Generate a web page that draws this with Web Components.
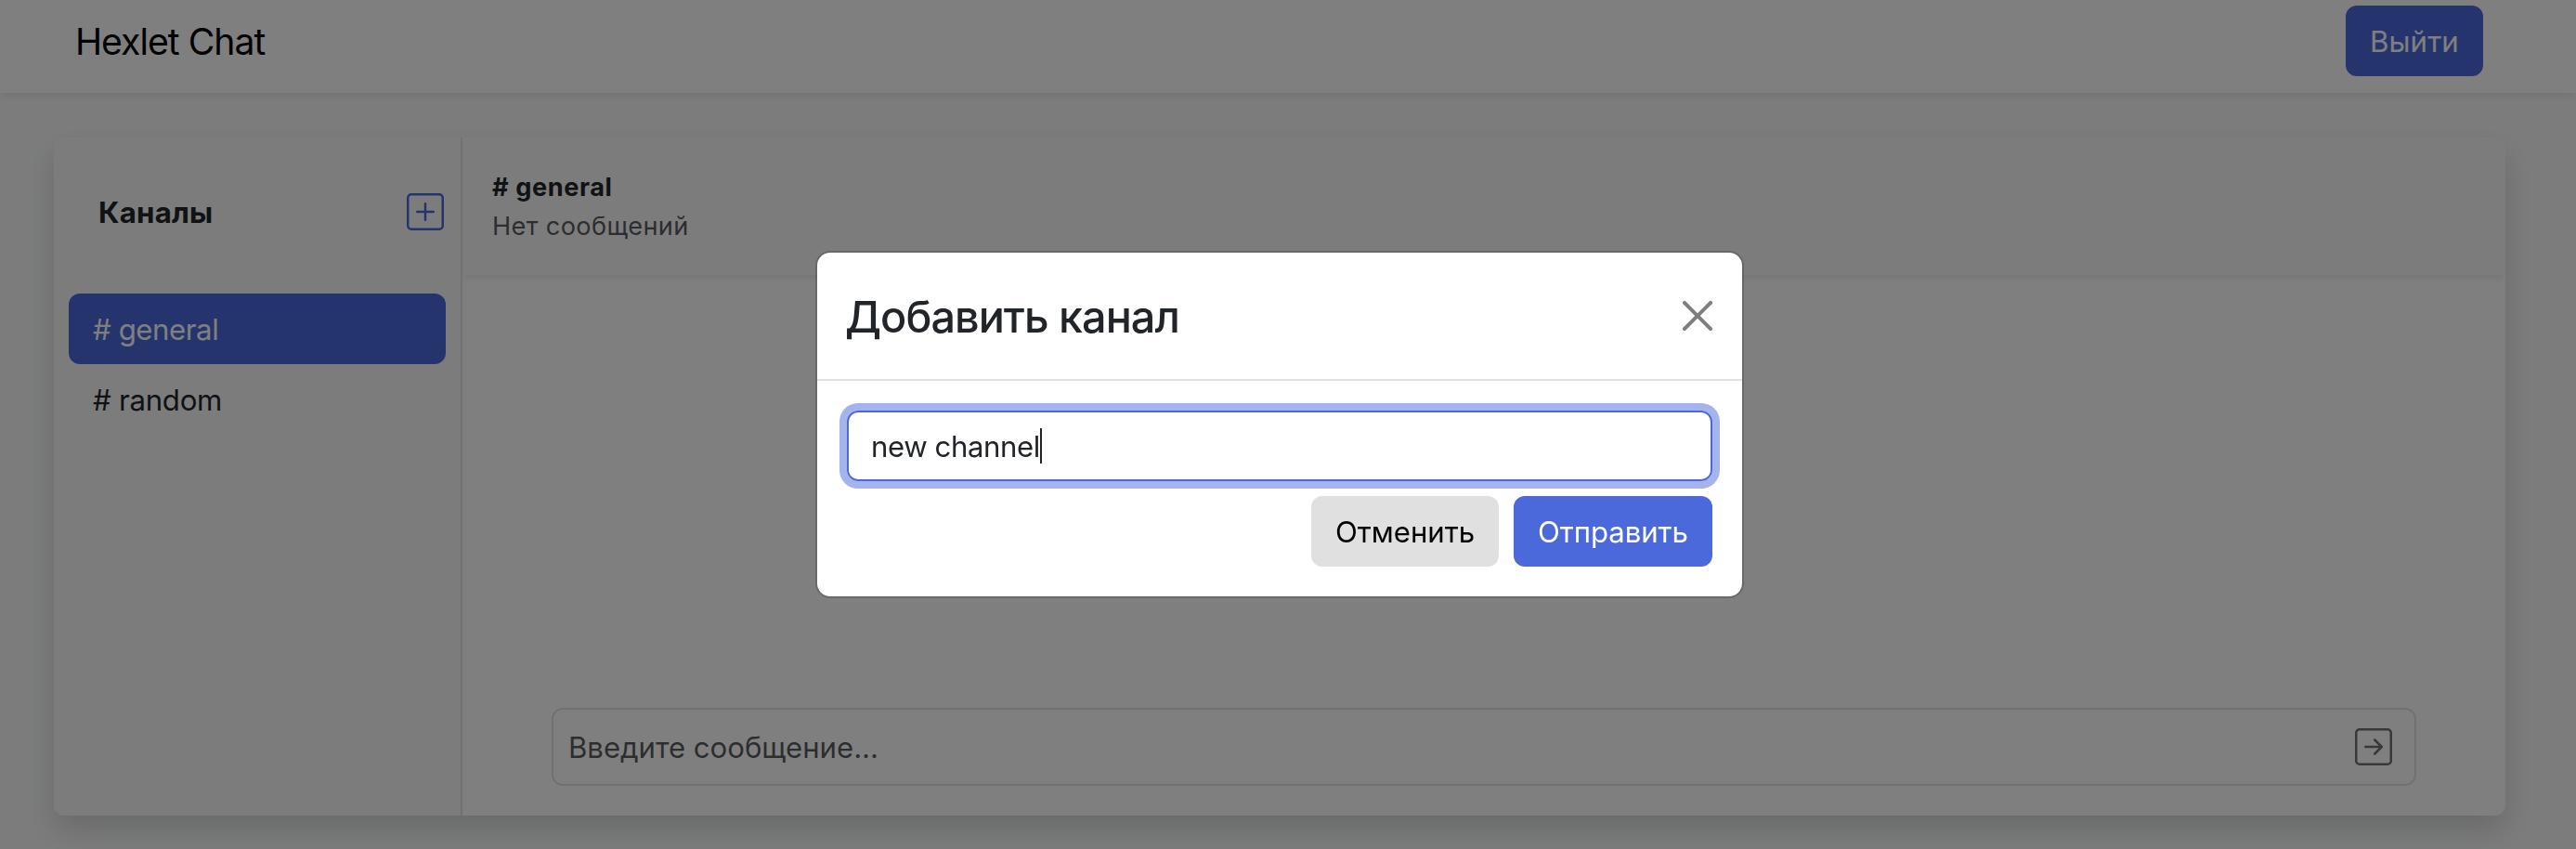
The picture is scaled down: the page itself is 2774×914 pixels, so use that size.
<!DOCTYPE html>
<html lang="ru">
<head>
<meta charset="utf-8">
<title>Hexlet Chat</title>
<style>
  html, body { margin: 0; height: 100%; overflow: hidden; }
  body {
    background: #f8f9fa; color: #212529;
    font-family: Inter, "Liberation Sans", sans-serif; font-size: 31.2px; line-height: 48px;
    --primary: #4b69db; --border: #dee2e6;
  }
</style>
</head>
<body>
<chat-page>
  <chat-navbar slot="nav">Hexlet Chat<ui-button slot="action" style="--w:148px;--ls:.118px">Выйти</ui-button></chat-navbar>
  <chat-card slot="card">
    <channel-list slot="side">
      Каналы
      <channel-item slot="item" active style="--ls:-.442px"># general</channel-item>
      <channel-item slot="item" style="--ls:-.271px"># random</channel-item>
    </channel-list>
    <chat-header slot="main"># general<span slot="count">Нет сообщений</span></chat-header>
    <message-form slot="main">Введите сообщение...</message-form>
  </chat-card>
</chat-page>
<chat-modal>
  Добавить канал
  <text-field slot="body">new channel</text-field>
  <ui-button slot="actions" variant="light" style="--w:202px;--ls:-.04px">Отменить</ui-button>
  <ui-button slot="actions" style="--w:214px;--ls:-.09px">Отправить</ui-button>
</chat-modal>

<script>
const define = (name, html) => {
  const tpl = document.createElement('template');
  tpl.innerHTML = '<style>*{box-sizing:border-box}:host{box-sizing:border-box}</style>' + html;
  customElements.define(name, class extends HTMLElement {
    constructor() {
      super();
      this.attachShadow({ mode: 'open' }).append(tpl.content.cloneNode(true));
    }
  });
};

define('chat-page', `
  <style>
    :host { display: flex; flex-direction: column; height: 914px; }
    main { padding: 48px 76px 36px 58px; flex: 1; display: flex; }
    ::slotted(chat-card) { flex: 1; }
  </style>
  <slot name="nav"></slot><main><slot name="card"></slot></main>`);

define('chat-navbar', `
  <style>
    :host { display: flex; justify-content: space-between; align-items: center; height: 100px;
      padding: 0 100px 12px 81px; background: #fff; box-shadow: 0 4px 8px rgba(0,0,0,.075); flex: none; }
    .brand { padding-top: 2px; font-size: 39.2px; letter-spacing: -1px; color: #000; line-height: 60px; white-space: nowrap; }
  </style>
  <div class="brand"><slot></slot></div><slot name="action"></slot>`);

define('ui-button', `
  <style>
    :host { display: flex; align-items: center; width: var(--w); height: 76px; padding: 2px 0 0 26px;
      border-radius: 12px; background: var(--primary); color: #fff; letter-spacing: var(--ls);
      font-size: 31.2px; white-space: nowrap; }
    :host([variant="light"]) { background: #e0e0e0; color: #000; }
  </style><slot></slot>`);

define('chat-card', `
  <style>
    :host { display: block; border-radius: 12px; box-shadow: 0 16px 32px rgba(0,0,0,.15); height: 730px; }
    .grid { display: grid; grid-template-columns: 440px minmax(0, 1fr); height: 100%; border-radius: 12px;
      overflow: hidden; background: #fff; }
    aside { background: #f8f9fa; border-right: 2px solid var(--border); }
    section { display: flex; flex-direction: column; justify-content: space-between; overflow: hidden; }
  </style>
  <div class="grid"><aside><slot name="side"></slot></aside><section><slot name="main"></slot></section></div>`);

define('channel-list', `
  <style>
    :host { display: block; }
    header { display: flex; justify-content: space-between; align-items: center; height: 160px;
      padding: 0 18px 0 48px; font-weight: 700; letter-spacing: .241px; }
    span { padding-top: 2px; }
    svg { width: 40px; height: 40px; fill: var(--primary); display: block; }
    nav { padding: 8px 16px 0; }
  </style>
  <header><span><slot></slot></span>
    <svg viewBox="0 0 16 16"><path d="M14 1a1 1 0 0 1 1 1v12a1 1 0 0 1-1 1H2a1 1 0 0 1-1-1V2a1 1 0 0 1 1-1zM2 0a2 2 0 0 0-2 2v12a2 2 0 0 0 2 2h12a2 2 0 0 0 2-2V2a2 2 0 0 0-2-2z"/><path d="M8 4a.5.5 0 0 1 .5.5v3h3a.5.5 0 0 1 0 1h-3v3a.5.5 0 0 1-1 0v-3h-3a.5.5 0 0 1 0-1h3v-3A.5.5 0 0 1 8 4"/></svg>
  </header>
  <nav><slot name="item"></slot></nav>`);

define('channel-item', `
  <style>
    :host { display: flex; align-items: center; height: 76px; padding: 2px 0 0 26px; border-radius: 12px;
      letter-spacing: var(--ls); width: 406px; }
    :host([active]) { background: var(--primary); color: #fff; }
  </style><slot></slot>`);

define('chat-header', `
  <style>
    :host { display: block; padding: 33px 32px 31px; background: #f8f9fa; box-shadow: 0 4px 8px rgba(0,0,0,.075);
      font-size: 27.2px; line-height: 42px; }
    .name { font-weight: 700; letter-spacing: .57px; }
    .count { color: rgba(33,37,41,.75); letter-spacing: .35px; }
  </style>
  <div class="name"><slot></slot></div><div class="count"><slot name="count"></slot></div>`);

define('message-form', `
  <style>
    :host { display: block; padding: 0 96px 32px; }
    .box { display: flex; justify-content: space-between; align-items: center; height: 84px;
      padding: 0 24px 0 16px; border: 2px solid var(--border); border-radius: 12px; }
    .ph { padding-top: 2px; color: rgba(33,37,41,.75); letter-spacing: -.047px; }
    svg { width: 40px; height: 40px; fill: #212529; opacity: .65; display: block; }
  </style>
  <div class="box"><span class="ph"><slot></slot></span>
    <svg viewBox="0 0 16 16"><path fill-rule="evenodd" d="M15 2a1 1 0 0 0-1-1H2a1 1 0 0 0-1 1v12a1 1 0 0 0 1 1h12a1 1 0 0 0 1-1zM0 2a2 2 0 0 1 2-2h12a2 2 0 0 1 2 2v12a2 2 0 0 1-2 2H2a2 2 0 0 1-2-2zm4.500 5.500a.5.5 0 0 0 0 1h5.793l-2.147 2.146a.5.5 0 0 0 .708.708l3-3a.5.5 0 0 0 0-.708l-3-3a.5.5 0 1 0-.708.708L10.293 7.500z"/></svg>
  </div>`);

define('chat-modal', `
  <style>
    :host { display: flex; justify-content: center; align-items: flex-start; position: fixed; inset: 0;
      padding: 270px 18px 0 0; background: rgba(0,0,0,.5); }
    .dialog { width: 1000px; height: 374px; border: 2px solid rgba(0,0,0,.175); border-radius: 16px;
      background: #fff; background-clip: padding-box; }
    header { display: flex; justify-content: space-between; align-items: center; height: 138px;
      padding: 0 32px 0 30px; border-bottom: 2px solid var(--border); }
    h4 { margin: 0; padding-top: 2px; font-size: 46.8px; font-weight: 500; line-height: 72px; letter-spacing: -.983px; white-space: nowrap; }
    svg { width: 32px; height: 32px; opacity: .5; display: block; }
    .body { padding: 32px; }
    .actions { display: flex; justify-content: flex-end; gap: 16px; margin-top: 16px; }
  </style>
  <div class="dialog">
    <header><h4><slot></slot></h4>
      <svg viewBox="0 0 16 16"><path d="M.293.293a1 1 0 0 1 1.414 0L8 6.586 14.293.293a1 1 0 1 1 1.414 1.414L9.414 8l6.293 6.293a1 1 0 0 1-1.414 1.414L8 9.414l-6.293 6.293a1 1 0 0 1-1.414-1.414L6.586 8 .293 1.707a1 1 0 0 1 0-1.414z"/></svg>
    </header>
    <div class="body"><slot name="body"></slot><div class="actions"><slot name="actions"></slot></div></div>
  </div>`);

define('text-field', `
  <style>
    :host { display: flex; align-items: center; height: 76px; padding: 2px 0 0 24px; border: 2px solid var(--primary);
      border-radius: 12px; box-shadow: 0 0 0 8px rgba(75,105,219,.5); letter-spacing: -.44px; }
    i { width: 2px; height: 38px; background: #212529; margin: -2px 0 0 0; }
  </style><slot></slot><i></i>`);
</script>
</body>
</html>
